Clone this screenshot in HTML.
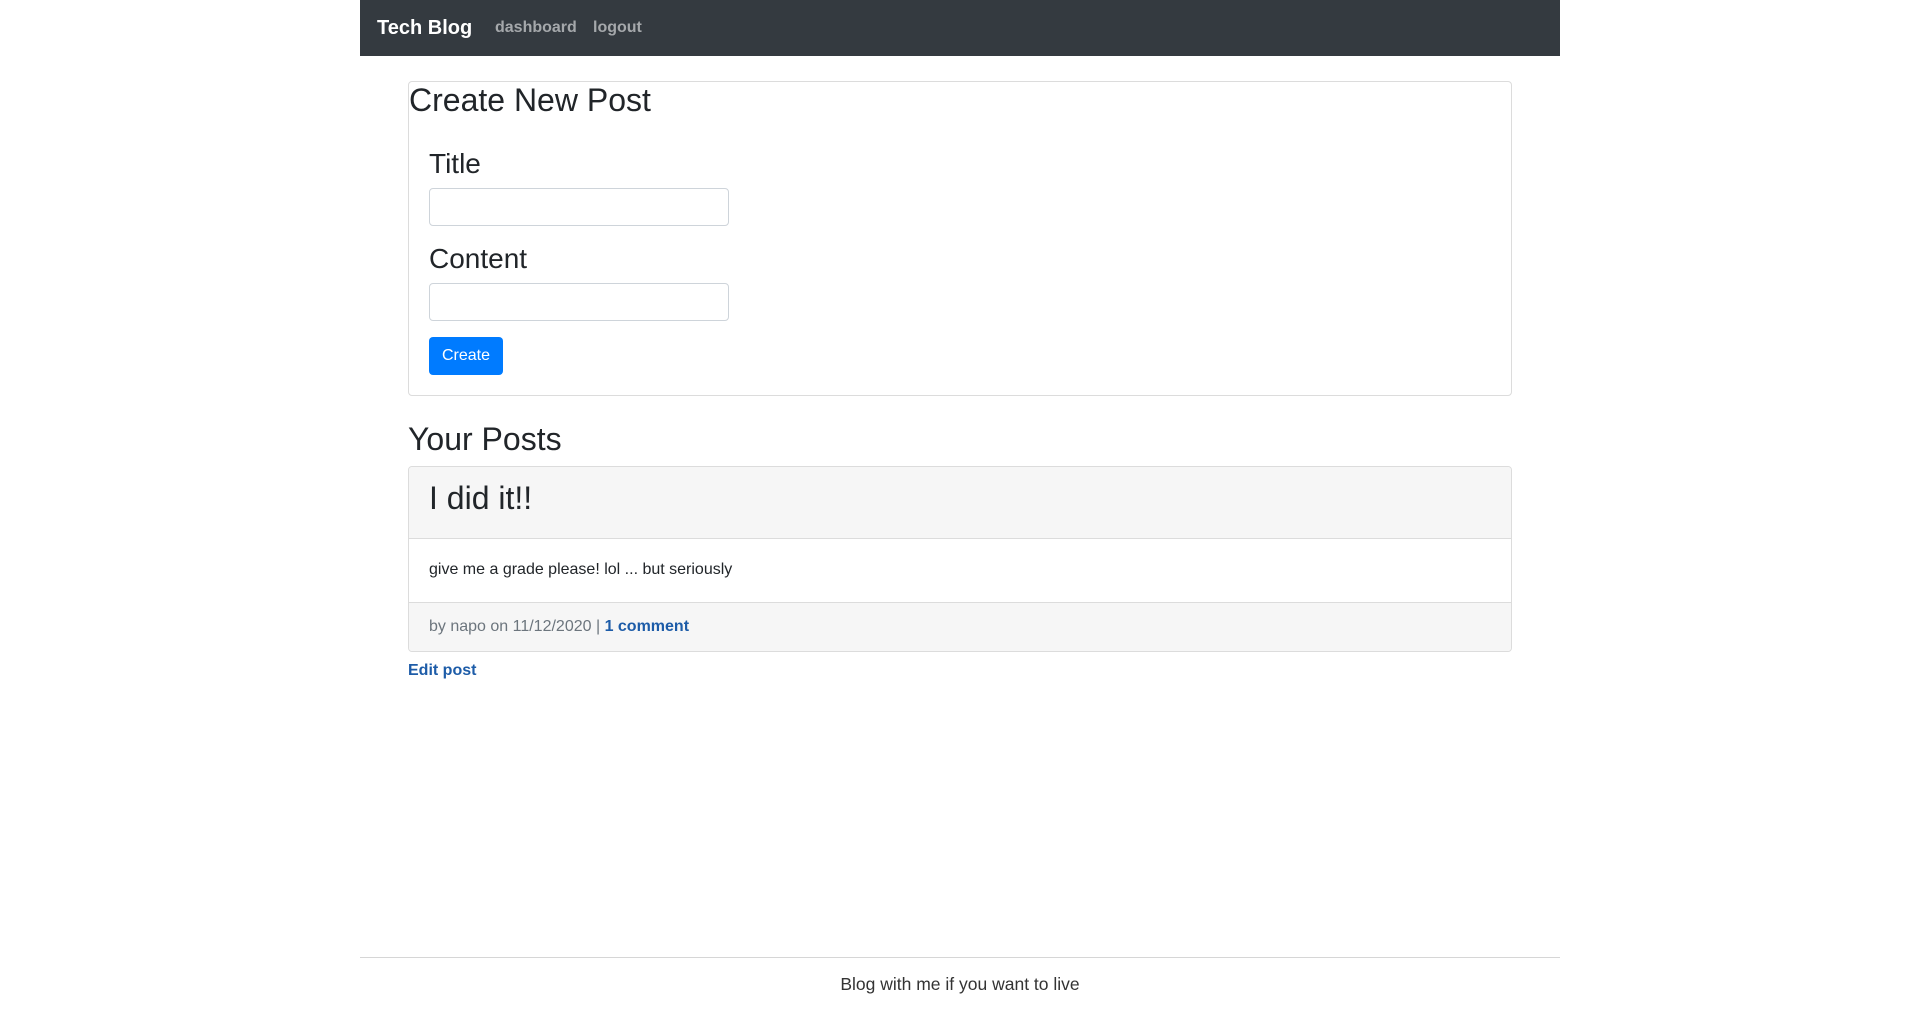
<!DOCTYPE html>
<html><head><meta charset="utf-8"><style>
*{box-sizing:border-box}
body{margin:0;font-family:"Liberation Sans",Arial,sans-serif;color:#212529;background:#fff;width:1920px;height:1009px;position:relative;overflow:hidden}
.nav{position:absolute;left:360px;top:0;width:1200px;height:56px;background:#343a40}
.brand{position:absolute;left:17px;top:17px;color:#fff;font-size:20px;font-weight:bold}
.lnk{position:absolute;top:19px;color:#a5a8ab;font-size:16px;font-weight:bold}
.card1{position:absolute;left:408px;top:81px;width:1104px;height:315px;border:1px solid #dcdcdc;border-radius:4px}
.h2{position:absolute;font-size:32px;line-height:38px;color:#212529}
.lbl{position:absolute;left:20px;font-size:28px;line-height:32px}
.inp{position:absolute;left:20px;width:300px;height:38px;border:1px solid #ced4da;border-radius:4px}
.btn{position:absolute;left:20px;top:255px;width:74px;height:38px;background:#007bff;border-radius:4px;color:#fff;font-size:16px;line-height:38px;text-align:center}
.card2{position:absolute;left:408px;top:466px;width:1104px;height:186px;border:1px solid #dcdcdc;border-radius:4px;overflow:hidden}
.hd{height:72px;background:#f6f6f6;border-bottom:1px solid #dcdcdc;position:relative}
.bd{height:64px;border-bottom:1px solid #dcdcdc;position:relative}
.ft{height:48px;background:#f6f6f6;position:relative}
a{color:#1d5ca8;font-weight:bold;text-decoration:none}
</style></head><body>
<div class="nav"><div class="brand">Tech Blog</div><div class="lnk" style="left:135px">dashboard</div><div class="lnk" style="left:233px">logout</div></div>
<div class="card1">
<div class="h2" style="left:0;top:-1px">Create New Post</div>
<div class="lbl" style="top:66px">Title</div>
<div class="inp" style="top:106px"></div>
<div class="lbl" style="top:161px">Content</div>
<div class="inp" style="top:201px"></div>
<div class="btn">Create</div>
</div>
<div class="h2" style="left:408px;top:420px">Your Posts</div>
<div class="card2">
<div class="hd"><div class="h2" style="left:20px;top:12px">I did it!!</div></div>
<div class="bd"><div style="position:absolute;left:20px;top:22px;font-size:16px">give me a grade please! lol ... but seriously</div></div>
<div class="ft"><div style="position:absolute;left:20px;top:15px;font-size:16px;color:#6c757d">by napo on 11/12/2020 | <a>1 comment</a></div></div>
</div>
<div style="position:absolute;left:408px;top:662px;font-size:16px"><a>Edit post</a></div>
<div style="position:absolute;left:360px;top:957px;width:1200px;border-top:1px solid #d6d6d6"></div>
<div style="position:absolute;left:360px;top:974px;width:1200px;text-align:center;font-size:17.5px;color:#333">Blog with me if you want to live</div>
</body></html>
